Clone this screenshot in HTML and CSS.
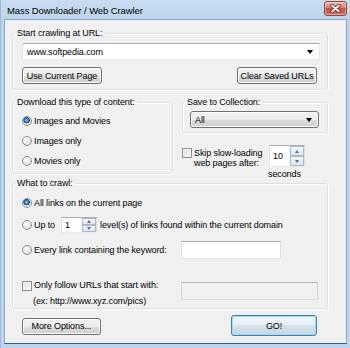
FILE: index.html
```html
<!DOCTYPE html>
<html lang="en">
<head>
    <meta charset="UTF-8">
    <title>Mass Downloader / Web Crawler</title>
    <link rel="stylesheet" href="styles.css">
</head>
<body>
    <div class="window">
        <div class="titlebar">
            <span class="title">Mass Downloader / Web Crawler</span>
            <span class="close">
                <svg width="11" height="9" viewBox="0 0 11 9">
                    <path d="M2 1.5 L9 7.5 M9 1.5 L2 7.5" stroke="#6b241d" stroke-width="3.4" stroke-linecap="round"/>
                    <path d="M2 1.5 L9 7.5 M9 1.5 L2 7.5" stroke="#fff" stroke-width="1.8" stroke-linecap="round"/>
                </svg>
            </span>
        </div>

        <div class="client">
            <fieldset class="group group-url">
                <legend>Start crawling at URL:</legend>
                <div class="group-body">
                    <div class="combo combo-edit"><span>www.softpedia.com</span><span class="arrow"></span></div>
                    <div class="button-row">
                        <button class="btn btn-wide">Use Current Page</button>
                        <button class="btn btn-wide">Clear Saved URLs</button>
                    </div>
                </div>
            </fieldset>

            <div class="middle">
                <fieldset class="group group-type">
                    <legend>Download this type of content:</legend>
                    <div class="group-body">
                        <div class="option-row"><span class="radio checked"></span>Images and Movies</div>
                        <div class="option-row"><span class="radio"></span>Images only</div>
                        <div class="option-row"><span class="radio"></span>Movies only</div>
                    </div>
                </fieldset>

                <div class="side">
                    <fieldset class="group group-collection">
                        <legend>Save to Collection:</legend>
                        <div class="group-body">
                            <div class="combo combo-list"><span>All</span><span class="arrow"></span></div>
                        </div>
                    </fieldset>
                    <div class="skip">
                        <span class="check"></span>
                        <span class="skip-text">Skip slow-loading<br>web pages after:</span>
                        <div class="skip-spin">
                            <div class="spin spin-tall">
                                <span class="spin-value">10</span>
                                <span class="spin-btns"><span class="spin-up"></span><span class="spin-down"></span></span>
                            </div>
                            <span class="seconds">seconds</span>
                        </div>
                    </div>
                </div>
            </div>

            <fieldset class="group group-crawl">
                <legend>What to crawl:</legend>
                <div class="group-body">
                    <div class="option-row"><span class="radio checked"></span>All links on the current page</div>
                    <div class="option-row row-levels">
                        <span class="radio"></span>Up to
                        <div class="spin spin-small">
                            <span class="spin-value">1</span>
                            <span class="spin-btns"><span class="spin-up"></span><span class="spin-down"></span></span>
                        </div>
                        level(s) of links found within the current domain
                    </div>
                    <div class="option-row row-keyword">
                        <span class="radio"></span><span class="keyword-label">Every link containing the keyword:</span>
                        <span class="textbox"></span>
                    </div>
                    <div class="follow-row">
                        <div class="follow-label">
                            <div class="follow-line"><span class="check"></span>Only follow URLs that start with:</div>
                            <div class="follow-example">(ex: http://www.xyz.com/pics)</div>
                        </div>
                        <span class="textbox textbox-disabled"></span>
                    </div>
                </div>
            </fieldset>

            <div class="footer">
                <button class="btn btn-more">More Options...</button>
                <button class="btn btn-go">GO!</button>
            </div>
        </div>
    </div>
</body>
</html>
```

FILE: styles.css
```css
* {
    margin: 0;
    padding: 0;
    box-sizing: border-box;
}

body {
    font-family: "Liberation Sans", Arial, sans-serif;
    font-size: 9px;
    letter-spacing: -0.1px;
    color: #000;
    background: #fff;
}

.window {
    width: 350px;
    height: 348px;
    background: linear-gradient(#cadcf0, #bdd4ec 20px);
    border-left: 1px solid #9dbada;
    padding: 0 3px 4px 3px;
    display: flex;
    flex-direction: column;
}

/* title bar */
.titlebar {
    height: 19px;
    display: flex;
    align-items: flex-start;
    justify-content: space-between;
    padding-left: 3px;
}

.title {
    font-size: 9.5px;
    letter-spacing: -0.1px;
    line-height: 12px;
    margin-top: 5px;
}

.close {
    width: 23px;
    height: 15px;
    margin-top: 1px;
    border: 1px solid #8c4a43;
    border-radius: 3px;
    background: linear-gradient(#edbbb0, #dc7c6f 45%, #c94b3e 50%, #d77361);
    box-shadow: inset 0 0 0 1px rgba(255,255,255,0.35);
    display: flex;
    align-items: center;
    justify-content: center;
}

/* client area */
.client {
    flex: 1;
    background: #f0f0f0;
    border: 1px solid #8ca9c9;
    border-bottom-color: #2f6095;
    padding: 7px 0 0 7px;
}

.group {
    border: 1px solid #d5dfe5;
    border-radius: 3px;
    box-shadow: inset 1px 1px 0 #fff, 1px 1px 0 #fff;
    min-width: 0;
}

.group legend {
    margin-left: 2px;
    padding: 0 2px;
    line-height: 12px;
}

.group-url {
    width: 316px;
}

.group-url .group-body {
    padding: 4px 7px 5px 9px;
}

/* combos and text fields */
.combo {
    height: 17px;
    display: flex;
    align-items: center;
    padding-left: 4px;
}

.combo-edit {
    background: #fff;
    border: 1px solid;
    border-color: #abadb3 #e2e3ea #e3e9ef #e2e3ea;
}

.combo-list {
    border: 1px solid #707070;
    border-radius: 3px;
    background: linear-gradient(#f2f2f2, #ebebeb 50%, #dddddd 50%, #cfcfcf);
    box-shadow: inset 0 0 0 1px #fcfcfc;
}

.arrow {
    margin-left: auto;
    margin-right: 6px;
    width: 0;
    height: 0;
    border-left: 3.5px solid transparent;
    border-right: 3.5px solid transparent;
    border-top: 4px solid #000;
}

.textbox {
    display: block;
    height: 18px;
    background: #fff;
    border: 1px solid;
    border-color: #abadb3 #dbdfe6 #e3e9ef #e2e3ea;
}

.textbox-disabled {
    background: #f0f0f0;
    border-color: #b5b8be #d3d6dc #d9dde3 #d3d6dc;
}

/* buttons */
.btn {
    font: inherit;
    letter-spacing: inherit;
    color: #000;
    height: 17px;
    border: 1px solid #707070;
    border-radius: 3px;
    background: linear-gradient(#f2f2f2, #ebebeb 50%, #dddddd 50%, #cfcfcf);
    box-shadow: inset 0 0 0 1px #fcfcfc;
}

.btn-wide {
    width: 80px;
}

.button-row {
    display: flex;
    justify-content: space-between;
    margin-top: 7px;
    padding-right: 3px;
}

/* radios and checkboxes */
.radio {
    width: 10px;
    height: 10px;
    flex: none;
    border-radius: 50%;
    border: 1px solid #8e8f8f;
    background: radial-gradient(circle at 40% 35%, #fdfdfd, #e4e4e4 60%, #cfd0d2);
    margin-right: 2px;
}

.radio.checked {
    background: radial-gradient(circle at 45% 40%, #a9d3f5 0, #2b76b7 2px, #1f4f7c 3px, #f4f4f4 3.5px, #dedede 70%, #cfd0d2);
}

.check {
    width: 10px;
    height: 10px;
    flex: none;
    border: 1px solid #8e8f8f;
    background: linear-gradient(135deg, #dcdcdc, #fdfdfd);
    box-shadow: inset 0 0 0 1px #f4f4f4;
}

.option-row {
    height: 20px;
    display: flex;
    align-items: center;
}

/* middle row */
.middle {
    display: flex;
    gap: 9px;
    height: 78px;
    margin-top: 6px;
    align-items: flex-start;
}

.group-type {
    width: 161px;
}

.group-type .group-body {
    padding: 3px 0 2px 9px;
}

.side {
    width: 146px;
}

.group-collection .group-body {
    padding: 3px 8px 4px 7px;
}

.skip {
    display: flex;
    align-items: flex-start;
    margin-top: 12px;
}

.skip .check {
    margin-top: 3px;
}

.skip-text {
    width: 77px;
    padding-left: 2px;
    line-height: 10px;
    margin-top: 3px;
}

.skip-spin {
    display: flex;
    flex-direction: column;
}

.seconds {
    margin: 2px 0 0 -1px;
    line-height: 11px;
}

/* spinners */
.spin {
    display: flex;
    width: 36px;
    background: #fff;
    border: 1px solid;
    border-color: #abadb3 #dbdfe6 #e3e9ef #e2e3ea;
}

.spin-tall {
    height: 22px;
}

.spin-small {
    height: 16px;
    margin: 0 3px 0 6px;
}

.spin-value {
    padding-left: 3px;
    align-self: center;
}

.spin-btns {
    margin-left: auto;
    width: 14px;
    display: flex;
    flex-direction: column;
}

.spin-up,
.spin-down {
    flex: 1;
    border: 1px solid #aeb9c6;
    background: linear-gradient(#f6f8fb, #dde5ef);
    display: flex;
    align-items: center;
    justify-content: center;
}

.spin-up::after,
.spin-down::after {
    content: "";
    width: 0;
    height: 0;
    border-left: 2.5px solid transparent;
    border-right: 2.5px solid transparent;
}

.spin-up::after {
    border-bottom: 3px solid #4f6fa5;
}

.spin-down::after {
    border-top: 3px solid #4f6fa5;
}

/* what to crawl */
.group-crawl {
    width: 316px;
    margin-top: 3px;
}

.group-crawl .group-body {
    padding: 4px 9px 1px 9px;
}

.row-levels {
    margin-top: 2px;
}

.row-keyword {
    margin-top: 5px;
}

.keyword-label {
    width: 147px;
}

.row-keyword .textbox {
    width: 100px;
}

.follow-row {
    display: flex;
    align-items: flex-start;
    margin-top: 20px;
}

.follow-label {
    width: 159px;
}

.follow-line {
    display: flex;
    align-items: center;
    line-height: 11px;
}

.follow-line .check {
    margin-right: 2px;
}

.follow-example {
    line-height: 11px;
    margin-top: 5px;
    padding-left: 11px;
}

.follow-row .textbox {
    width: 137px;
    margin-top: 2px;
}

/* footer */
.footer {
    width: 316px;
    height: 21px;
    margin-top: 6px;
    display: flex;
    align-items: center;
    padding: 0 11px 0 10px;
}

.btn-more {
    width: 79px;
    margin-top: 1px;
}

.btn-go {
    width: 86px;
    height: 21px;
    margin-left: auto;
    border-color: #3c7fb1;
    box-shadow: inset 0 0 0 1px #9fdcf8;
    background: linear-gradient(#f0f6fa, #e5eef5 50%, #d6e3ec 50%, #c7d6e1);
}
```
